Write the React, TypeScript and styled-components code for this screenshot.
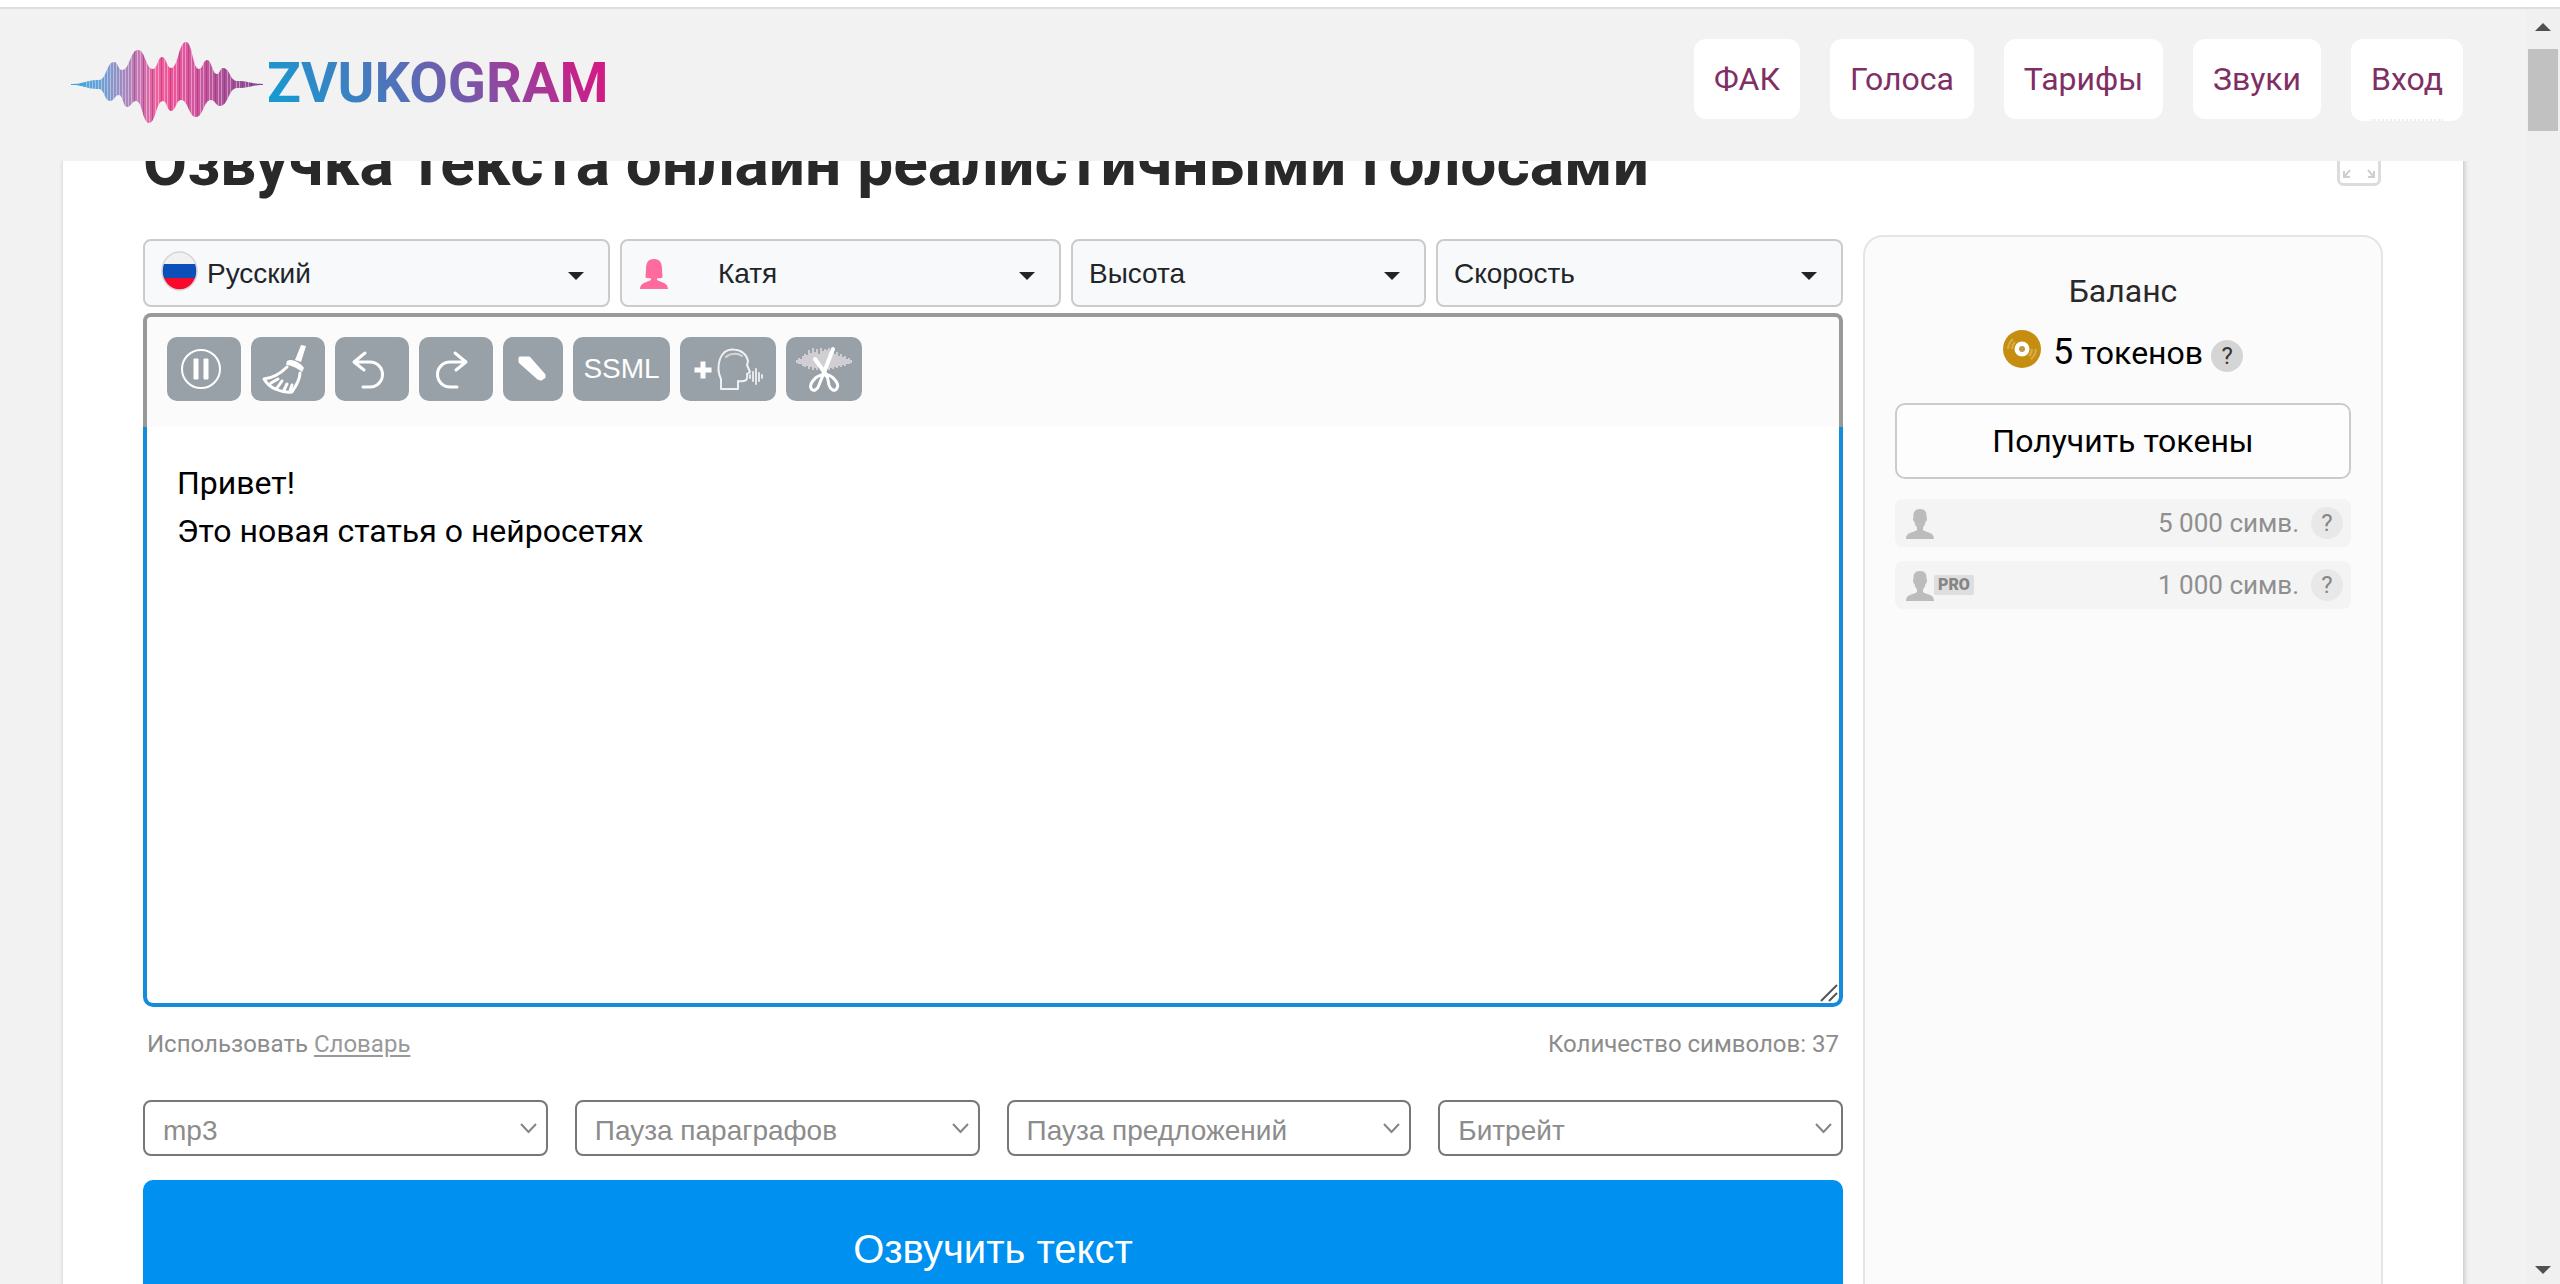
import React, { useState } from "react";
import styled, { createGlobalStyle } from "styled-components";

const roboto = `Roboto, "Open Sans", sans-serif`;
const arial = `"Liberation Sans", Arial, sans-serif`;

const GlobalStyle = createGlobalStyle`
  *, *::before, *::after { box-sizing: border-box; }
  body { margin: 0; background: #f2f2f2; color: #292929; font-family: ${roboto}; }
  button, select, textarea { font: inherit; color: inherit; }
  svg { display: block; flex: none; }
`;

/* ---------- page frame ---------- */

const Page = styled.div`
  display: flex;
  flex-direction: column;
  height: 100vh;
  overflow: hidden;
`;

const TopStrip = styled.div`
  flex: none;
  height: 9px;
  background: #fff;
  border-bottom: 2px solid #dedede;
`;

const Viewport = styled.div`
  flex: 1;
  min-height: 0;
  display: grid;
  grid-template-columns: minmax(0, 1fr) 34px;
`;

const Content = styled.div`
  display: flex;
  flex-direction: column;
  min-height: 0;
`;

const ScrollTrack = styled.div`
  display: flex;
  flex-direction: column;
  align-items: center;
  padding: 14px 0 10px;
  background: #f0f0f0;
`;

const ScrollThumb = styled.div`
  width: 30px;
  height: 82px;
  margin: 18px 0 auto;
  background: #c1c1c1;
`;

/* ---------- header ---------- */

const Header = styled.header`
  flex: none;
  display: flex;
  justify-content: space-between;
  align-items: flex-start;
  height: 152px;
  padding: 30px 63px 0 71px;
`;

const Logo = styled.a`
  display: flex;
  align-items: center;
  gap: 4px;
  padding-top: 2px;
  text-decoration: none;
`;

const LogoText = styled.span`
  font-size: 56px;
  line-height: 64px;
  font-weight: 700;
  background: linear-gradient(60deg, #0f9fd4 0%, #5b6bb5 45%, #cf1c86 92%);
  background-clip: text;
  -webkit-background-clip: text;
  color: transparent;
`;

const Nav = styled.nav`
  display: flex;
  align-items: flex-start;
  gap: 30px;
`;

const NavLink = styled.a<{ $dotted?: boolean }>`
  position: relative;
  padding: 16px 20px ${(p) => (p.$dotted ? 18 : 16)}px;
  border-radius: 12px;
  background: #fff;
  color: #7f2f64;
  font-size: 32px;
  line-height: 48px;
  text-decoration: none;

  &::after {
    content: "";
    display: ${(p) => (p.$dotted ? "block" : "none")};
    position: absolute;
    left: 20px;
    right: 20px;
    bottom: 0;
    border-bottom: 2px dotted #efefef;
  }
`;

/* ---------- card ---------- */

const Main = styled.main`
  flex: 1;
  min-height: 0;
  overflow: hidden;
  padding: 0 63px;
`;

const Card = styled.section`
  min-height: 120vh;
  margin-top: -80px;
  padding: 45px 80px 80px;
  background: #fff;
  box-shadow: 1px 0 5px rgba(0, 0, 0, 0.22);
`;

const TitleRow = styled.div`
  display: flex;
  justify-content: space-between;
  align-items: center;
  margin-bottom: 33px;
`;

const Title = styled.h1`
  margin: 0;
  font-size: 64px;
  line-height: 76px;
  font-weight: 700;
`;

const IconButton = styled.button`
  padding: 0;
  border: 0;
  background: none;
`;

const Columns = styled.div`
  display: grid;
  grid-template-columns: minmax(0, 1fr) 520px;
  gap: 20px;
`;

const Workspace = styled.div`
  padding-top: 4px;
`;

/* ---------- voice selectors ---------- */

const VoiceRow = styled.div`
  display: grid;
  grid-template-columns: 467fr 441fr 355fr 407fr;
  gap: 10px;
  margin-bottom: 6px;
`;

const VoiceField = styled.label<{ $wide?: boolean }>`
  display: flex;
  align-items: center;
  gap: ${(p) => (p.$wide ? 50 : 9)}px;
  height: 68px;
  padding: 0 24px 0 16px;
  border: 2px solid #cbcbcb;
  border-radius: 8px;
  background: #f8f9fb;
  color: #212529;
`;

const VoiceSelect = styled.select`
  flex: 1;
  min-width: 0;
  height: 100%;
  padding: 0;
  border: 0;
  outline: 0;
  appearance: none;
  background: transparent;
  font-family: ${arial};
  font-size: 28px;
`;

/* ---------- editor ---------- */

const Editor = styled.div`
  position: relative;
`;

const Toolbar = styled.div`
  display: flex;
  gap: 10px;
  padding: 20px 20px 26px;
  border: 4px solid #999;
  border-bottom: 0;
  border-radius: 8px 8px 0 0;
  background: #fbfbfb;
`;

const Tool = styled.button<{ $width: number }>`
  display: flex;
  align-items: center;
  justify-content: center;
  width: ${(p) => p.$width}px;
  height: 64px;
  padding: 0;
  border: 0;
  border-radius: 10px;
  background: #99a1a8;
  color: #fff;
  font-family: ${arial};
  font-size: 28px;
`;

const TextArea = styled.textarea`
  display: block;
  width: 100%;
  height: 580px;
  padding: 32px 30px;
  border: 4px solid #148bdb;
  border-top: 0;
  border-radius: 0 0 10px 10px;
  outline: 0;
  resize: none;
  background: #fff;
  color: #000;
  font-size: 32px;
  line-height: 48px;
`;

const ResizeGrip = styled.svg`
  position: absolute;
  right: 5px;
  bottom: 5px;
  pointer-events: none;
`;

const Meta = styled.div`
  display: flex;
  justify-content: space-between;
  padding: 19px 4px 38px;
  color: #8c8c8c;
  font-size: 24px;
  line-height: 36px;
`;

const MetaLink = styled.a`
  color: #999;
  text-decoration: underline;
  text-underline-offset: 3px;
`;

const OptionRow = styled.div`
  display: grid;
  grid-template-columns: repeat(4, minmax(0, 1fr));
  gap: 27px;
  margin-bottom: 24px;
`;

const OptionField = styled.label`
  display: flex;
  align-items: center;
  height: 56px;
  padding: 0 9px 0 18px;
  border: 2px solid #777;
  border-radius: 8px;
  background: #fff;
  color: #8c8c8c;
`;

const OptionSelect = styled(VoiceSelect)`
  padding-top: 4px;
`;

const Submit = styled.button`
  display: block;
  width: 100%;
  height: 138px;
  border: 0;
  border-radius: 10px;
  background: #0090f0;
  color: #fff;
  font-family: ${arial};
  font-size: 40px;
`;

/* ---------- sidebar ---------- */

const Sidebar = styled.aside`
  display: flex;
  flex-direction: column;
  min-height: 1100px;
  padding: 30px;
  border: 2px solid #e5e5e5;
  border-radius: 20px;
  background: #fbfbfb;
`;

const BalanceTitle = styled.div`
  font-size: 32px;
  line-height: 48px;
  text-align: center;
`;

const Tokens = styled.div`
  display: flex;
  justify-content: center;
  align-items: center;
  gap: 12px;
  height: 48px;
  margin: 13px 0 27px;
  color: #000;
  font-size: 32px;
`;

const TokenText = styled.div`
  display: flex;
  align-items: baseline;
  gap: 8px;
`;

const TokenCount = styled.span`
  font-size: 36px;
`;

const Help = styled.button<{ $muted?: boolean }>`
  width: 32px;
  height: 32px;
  padding: 0;
  border: 0;
  border-radius: 50%;
  background: ${(p) => (p.$muted ? "#e8e8e8" : "#d5d5d5")};
  color: ${(p) => (p.$muted ? "#858585" : "#333")};
  font-size: 24px;
  line-height: 32px;
`;

const GetTokens = styled.button`
  height: 76px;
  border: 2px solid #cbcbcb;
  border-radius: 10px;
  background: #fdfdfd;
  color: #000;
  font-size: 32px;
  margin-bottom: 20px;
`;

const Quota = styled.div`
  display: flex;
  align-items: center;
  height: 48px;
  margin-bottom: 14px;
  padding: 0 8px 0 11px;
  border-radius: 8px;
  background: #f4f4f4;
  color: #8f8f8f;
  font-size: 26px;
`;

const QuotaValue = styled.span`
  margin: 0 12px 0 auto;
`;

const ProBadge = styled.span`
  padding: 0 4px;
  border-radius: 2px;
  background: #dedede;
  color: #858585;
  font-size: 16px;
  line-height: 20px;
  font-weight: 900;
`;

/* ---------- drawings ---------- */

type Point = [number, number];

const crest: Point[] = [
  [0, 43], [28, 39], [43, 21], [51, 29], [67, 9], [82, 28], [91, 16], [100, 27],
  [115, 1], [128, 28], [136, 19], [146, 33], [152, 27], [166, 40], [192, 43],
];
const trough: Point[] = [
  [192, 44], [166, 47], [149, 65], [140, 59], [125, 76], [110, 59], [100, 70],
  [92, 60], [78, 82], [65, 60], [56, 66], [48, 54], [39, 60], [28, 48], [0, 44],
];

const wavePath = [...crest, ...trough]
  .map(([x, y], i, all) => {
    if (i === 0) return `M${x} ${y}`;
    const [px, py] = all[i - 1];
    const mid = (px + x) / 2;
    return `C${mid} ${py} ${mid} ${y} ${x} ${y}`;
  })
  .join("");

const stripes = Array.from({ length: 56 }, (_, i) => i * 3 + 15);

const WaveLogo = () => (
  <svg width="192" height="84" viewBox="0 0 192 84">
    <defs>
      <linearGradient id="wave-tint">
        <stop offset="0" stopColor="#35a5dc" />
        <stop offset="0.15" stopColor="#69a2d6" />
        <stop offset="0.23" stopColor="#8d93c8" />
        <stop offset="0.34" stopColor="#c07ab5" />
        <stop offset="0.45" stopColor="#ee5f9c" />
        <stop offset="0.52" stopColor="#ee5596" />
        <stop offset="0.62" stopColor="#d9589f" />
        <stop offset="0.76" stopColor="#b4529a" />
        <stop offset="1" stopColor="#7d4b93" />
      </linearGradient>
      <clipPath id="wave-shape">
        <path d={wavePath} />
      </clipPath>
    </defs>
    <g clipPath="url(#wave-shape)">
      <rect width="192" height="84" fill="url(#wave-tint)" />
      {stripes.map((x, i) => (
        <rect
          key={x}
          x={x}
          width="1"
          height="84"
          fill={i % 3 === 1 && i > 14 ? "#8f1d6c" : "#fff"}
          opacity={i % 3 === 1 && i > 14 ? 0.4 : 0.38}
        />
      ))}
    </g>
  </svg>
);

const Flag = () => (
  <svg width="37" height="48" viewBox="0 0 37 48">
    <defs>
      <clipPath id="flag-shape">
        <ellipse cx="18.500" cy="22" rx="17.500" ry="19" />
      </clipPath>
    </defs>
    <g clipPath="url(#flag-shape)">
      <rect width="37" height="17" fill="#f1f1f1" />
      <rect y="15" width="37" height="15" fill="#0a50b8" />
      <rect y="29" width="37" height="18" fill="#f8092c" />
    </g>
    <ellipse cx="18.500" cy="22" rx="17.500" ry="19" fill="none" stroke="#d9d3dc" strokeWidth="1.500" />
  </svg>
);

const Woman = () => (
  <svg width="30" height="36" viewBox="-2 0 30 36">
    <path
      fill="#ff6b9d"
      d="M14 4C8 4 6 8 6 14L5.500 22.500C8 23.500 9 23 11 23.500V25C7 27 0 28 0 34H28C28 28 21 27 17 25V23.500C19 23 20 23.500 22.500 22.500L22 14C22 8 20 4 14 4Z"
    />
  </svg>
);

const Person = () => (
  <svg width="28" height="32" viewBox="0 0 28 32">
    <path
      fill="#bcbcbc"
      d="M14 2C9 2 7 5 7.500 10C6.500 11 7 14 8.500 15C9 18 10 19 11 20.500V23C7 26 0 25 0 32H28C28 25 21 26 17 23V20.500C18 19 19 18 19.500 15C21 14 21.500 11 20.500 10C21 5 19 2 14 2Z"
    />
  </svg>
);

const Caret = () => (
  <svg width="16" height="14" viewBox="0 0 16 14">
    <path d="M0 6H16L8 14Z" fill="#212529" />
  </svg>
);

const Chevron = () => (
  <svg width="17" height="11" viewBox="0 0 17 11" fill="none" stroke="#858585" strokeWidth="2">
    <path d="M1 1L8.500 9L16 1" />
  </svg>
);

const Coin = () => (
  <svg width="38" height="44" viewBox="0 0 38 44">
    <circle cx="19" cy="19" r="19" fill="#c68e10" />
    <path d="M5 19A14 14 0 0 1 10 9M9 19A10 10 0 0 1 12 12M33 19A14 14 0 0 1 28 29M29 19A10 10 0 0 1 26 26" fill="none" stroke="#d9ac4c" strokeWidth="2" />
    <circle cx="19" cy="19" r="7.500" fill="#fff" />
    <circle cx="19" cy="19" r="3" fill="#c09a4a" />
  </svg>
);

const Fullscreen = () => (
  <svg width="46" height="44" viewBox="0 0 46 44" fill="none" stroke="#dcdcdc" strokeWidth="3">
    <rect x="1.500" y="1.500" width="41" height="41" rx="5" />
    <path strokeWidth="2" stroke="#cfcfcf" d="M13 28L7 35M7 29V35H13M31 28L37 35M37 29V35H31M13 16L7 9M7 15V9H13M31 16L37 9M37 15V9H31" />
  </svg>
);

const ArrowUp = () => (
  <svg width="16" height="8" viewBox="0 0 16 8"><path d="M0 8L8 0L16 8Z" fill="#505050" /></svg>
);
const ArrowDown = () => (
  <svg width="16" height="8" viewBox="0 0 16 8"><path d="M0 0L8 8L16 0Z" fill="#505050" /></svg>
);

const PauseIcon = () => (
  <svg width="74" height="64" viewBox="0 0 74 64">
    <circle cx="34" cy="32" r="19" fill="none" stroke="#fff" strokeWidth="2" />
    <path d="M27 22H31V42H27ZM37 22H41V42H37Z" fill="#fff" stroke="#fff" />
  </svg>
);

const BroomIcon = () => (
  <svg width="74" height="64" viewBox="0 0 74 64">
    <path d="M50 8L55 9L50 25L44 23Z" fill="#fff" />
    <path d="M36 24C41 21 50 26 53 31L51 35C46 31 40 28 35 28Z" fill="#fff" />
    <path
      d="M36 30C30 36 22 41 13 42C18 51 30 56 41 55C45 49 49 42 49 36M20 46L27 42M26 51L31 44M33 53L36 47M39 54L41 48"
      fill="none" stroke="#fff" strokeWidth="3" strokeLinejoin="round" strokeLinecap="round"
    />
  </svg>
);

const UndoIcon = () => (
  <svg width="74" height="64" viewBox="0 0 74 64" fill="none" stroke="#fff" strokeWidth="3" strokeLinecap="round" strokeLinejoin="round">
    <path d="M30 16L19 25L29 33M19 25H35A12.500 12.500 0 0 1 35 50H28" />
  </svg>
);

const RedoIcon = () => (
  <svg width="74" height="64" viewBox="0 0 74 64" fill="none" stroke="#fff" strokeWidth="3" strokeLinecap="round" strokeLinejoin="round">
    <path d="M36 16L47 25L37 33M47 25H31A12.500 12.500 0 0 0 31 50H38" />
  </svg>
);

const EraserIcon = () => (
  <svg width="60" height="64" viewBox="0 0 60 64">
    <path d="M17 21H26L41 38V40L38 42L35 41L17 25Z" fill="#fff" stroke="#fff" strokeWidth="3" strokeLinejoin="round" />
  </svg>
);

const VoiceIcon = () => (
  <svg width="96" height="64" viewBox="0 0 96 64" fill="none" stroke="#fff" strokeLinecap="round" strokeLinejoin="round">
    <path d="M17 33H29M23 27V39" strokeWidth="5" strokeLinecap="square" />
    <path d="M41 52V42C37 34 38 28 40 22C43 14 49 12 54 12.500C62 13 67 18 68 24L67 28L70 35L67 37C68 43 66 45 58 44V52Z" strokeWidth="2" opacity="0.85" />
    <path d="M46 20C50 16 58 16 62 19" strokeWidth="2" opacity="0.6" />
    <path d="M70 38V41M73 35V44M76 32V47M79 36V44M82 38V41" strokeWidth="2" opacity="0.75" />
  </svg>
);

const cutHeights = [2, 4, 3, 6, 8, 7, 12, 9, 14, 10, 13, 8, 14, 11, 13, 12, 14, 10, 12, 8, 10, 6, 8, 5, 6, 3, 4, 2];

const CutIcon = () => (
  <svg width="76" height="64" viewBox="0 0 76 64" fill="none" stroke="#fff">
    <path
      d={cutHeights.map((h, i) => `M${11 + i * 2} ${25 - h}V${25 + Math.round(h * 0.6)}`).join("")}
      stroke="#d9d6d9" strokeWidth="2" opacity="0.85"
    />
    <path d="M47 12L37 38M29 22L41 39" strokeWidth="4" strokeLinecap="round" />
    <path d="M37 38C30 38 23 47 25 51C27 56 32 52 33 48ZM41 38C46 38 54 47 51 51C49 56 44 52 43 48Z" strokeWidth="3" />
  </svg>
);

/* ---------- data ---------- */

const navItems = [
  { text: "ФАК" },
  { text: "Голоса" },
  { text: "Тарифы" },
  { text: "Звуки" },
  { text: "Вход", dotted: true },
];

const voiceFields = [
  { value: "Русский", name: "Язык", icon: <Flag /> },
  { value: "Катя", name: "Голос", icon: <Woman />, wide: true },
  { value: "Высота", name: "Высота голоса" },
  { value: "Скорость", name: "Скорость речи" },
];

const tools = [
  { name: "Пауза", width: 74, face: <PauseIcon /> },
  { name: "Очистить", width: 74, face: <BroomIcon /> },
  { name: "Отменить", width: 74, face: <UndoIcon /> },
  { name: "Повторить", width: 74, face: <RedoIcon /> },
  { name: "Ударение", width: 60, face: <EraserIcon /> },
  { name: "SSML", width: 97, face: "SSML" },
  { name: "Добавить голос", width: 96, face: <VoiceIcon /> },
  { name: "Обрезать", width: 76, face: <CutIcon /> },
];

const options = [
  { value: "mp3", name: "Формат" },
  { value: "Пауза параграфов", name: "Пауза между параграфами" },
  { value: "Пауза предложений", name: "Пауза между предложениями" },
  { value: "Битрейт", name: "Битрейт файла" },
];

const quotas = [
  { value: "5 000 симв.", pro: false },
  { value: "1 000 симв.", pro: true },
];

export default function App() {
  const [text, setText] = useState("Привет!\nЭто новая статья о нейросетях");

  return (
    <Page>
      <GlobalStyle />
      <TopStrip />
      <Viewport>
        <Content>
          <Header>
            <Logo href="#">
              <WaveLogo />
              <LogoText>ZVUKOGRAM</LogoText>
            </Logo>
            <Nav>
              {navItems.map((item) => (
                <NavLink key={item.text} href="#" $dotted={item.dotted}>
                  {item.text}
                </NavLink>
              ))}
            </Nav>
          </Header>
          <Main>
            <Card>
              <TitleRow>
                <Title>Озвучка текста онлайн реалистичными голосами</Title>
                <IconButton type="button" aria-label="На весь экран">
                  <Fullscreen />
                </IconButton>
              </TitleRow>
              <Columns>
                <Workspace>
                  <VoiceRow>
                    {voiceFields.map((field) => (
                      <VoiceField key={field.name} $wide={field.wide}>
                        {field.icon}
                        <VoiceSelect aria-label={field.name}>
                          <option>{field.value}</option>
                        </VoiceSelect>
                        <Caret />
                      </VoiceField>
                    ))}
                  </VoiceRow>
                  <Editor>
                    <Toolbar>
                      {tools.map((tool) => (
                        <Tool key={tool.name} type="button" aria-label={tool.name} $width={tool.width}>
                          {tool.face}
                        </Tool>
                      ))}
                    </Toolbar>
                    <TextArea
                      aria-label="Текст для озвучки"
                      spellCheck={false}
                      value={text}
                      onChange={(e) => setText(e.target.value)}
                    />
                    <ResizeGrip width="18" height="18" viewBox="0 0 18 18" stroke="#555" strokeWidth="2">
                      <path d="M1 17L17 1M9 17L17 9" />
                    </ResizeGrip>
                  </Editor>
                  <Meta>
                    <span>
                      Использовать <MetaLink href="#">Словарь</MetaLink>
                    </span>
                    <span>Количество символов: {text.length}</span>
                  </Meta>
                  <OptionRow>
                    {options.map((option) => (
                      <OptionField key={option.name}>
                        <OptionSelect aria-label={option.name}>
                          <option>{option.value}</option>
                        </OptionSelect>
                        <Chevron />
                      </OptionField>
                    ))}
                  </OptionRow>
                  <Submit type="button">Озвучить текст</Submit>
                </Workspace>
                <Sidebar>
                  <BalanceTitle>Баланс</BalanceTitle>
                  <Tokens>
                    <Coin />
                    <TokenText>
                      <TokenCount>5</TokenCount>
                      <span>токенов</span>
                      <Help type="button">?</Help>
                    </TokenText>
                  </Tokens>
                  <GetTokens type="button">Получить токены</GetTokens>
                  {quotas.map((quota) => (
                    <Quota key={quota.value}>
                      <Person />
                      {quota.pro && <ProBadge>PRO</ProBadge>}
                      <QuotaValue>{quota.value}</QuotaValue>
                      <Help type="button" $muted>?</Help>
                    </Quota>
                  ))}
                </Sidebar>
              </Columns>
            </Card>
          </Main>
        </Content>
        <ScrollTrack>
          <ArrowUp />
          <ScrollThumb />
          <ArrowDown />
        </ScrollTrack>
      </Viewport>
    </Page>
  );
}
